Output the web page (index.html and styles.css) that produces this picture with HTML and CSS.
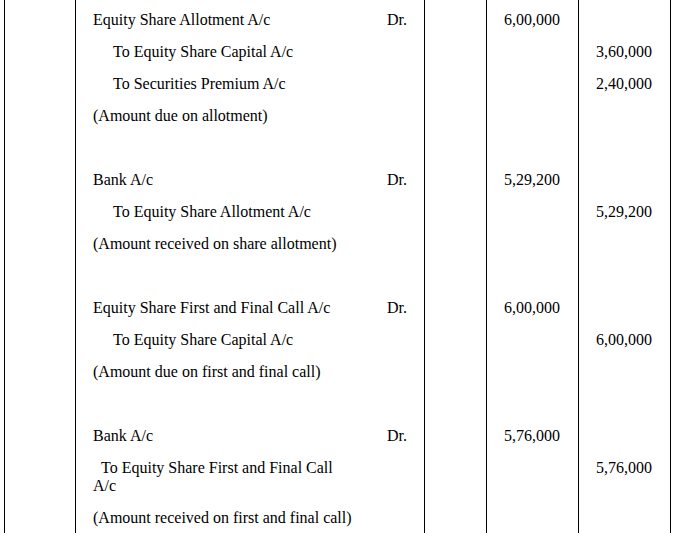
FILE: index.html
```html
<!DOCTYPE html>
<html lang="en">
<head>
<meta charset="utf-8">
<title>Journal Entries</title>
<link rel="stylesheet" href="styles.css">
</head>
<body>
<div class="journal">
  <!-- Entry 1 -->
  <div class="c date"></div><div class="c part">Equity Share Allotment A/c</div><div class="c dr">Dr.</div><div class="c lf"></div><div class="c amt">6,00,000</div><div class="c amt last"></div>
  <div class="c date"></div><div class="c part to">To Equity Share Capital A/c</div><div class="c dr"></div><div class="c lf"></div><div class="c amt"></div><div class="c amt last">3,60,000</div>
  <div class="c date"></div><div class="c part to">To Securities Premium A/c</div><div class="c dr"></div><div class="c lf"></div><div class="c amt"></div><div class="c amt last">2,40,000</div>
  <div class="c date"></div><div class="c part">(Amount due on allotment)</div><div class="c dr"></div><div class="c lf"></div><div class="c amt"></div><div class="c amt last"></div>
  <div class="c date"></div><div class="c part"></div><div class="c dr"></div><div class="c lf"></div><div class="c amt"></div><div class="c amt last"></div>

  <!-- Entry 2 -->
  <div class="c date"></div><div class="c part">Bank A/c</div><div class="c dr">Dr.</div><div class="c lf"></div><div class="c amt">5,29,200</div><div class="c amt last"></div>
  <div class="c date"></div><div class="c part to">To Equity Share Allotment A/c</div><div class="c dr"></div><div class="c lf"></div><div class="c amt"></div><div class="c amt last">5,29,200</div>
  <div class="c date"></div><div class="c part">(Amount received on share allotment)</div><div class="c dr"></div><div class="c lf"></div><div class="c amt"></div><div class="c amt last"></div>
  <div class="c date"></div><div class="c part"></div><div class="c dr"></div><div class="c lf"></div><div class="c amt"></div><div class="c amt last"></div>

  <!-- Entry 3 -->
  <div class="c date"></div><div class="c part">Equity Share First and Final Call A/c</div><div class="c dr">Dr.</div><div class="c lf"></div><div class="c amt">6,00,000</div><div class="c amt last"></div>
  <div class="c date"></div><div class="c part to">To Equity Share Capital A/c</div><div class="c dr"></div><div class="c lf"></div><div class="c amt"></div><div class="c amt last">6,00,000</div>
  <div class="c date"></div><div class="c part">(Amount due on first and final call)</div><div class="c dr"></div><div class="c lf"></div><div class="c amt"></div><div class="c amt last"></div>
  <div class="c date"></div><div class="c part"></div><div class="c dr"></div><div class="c lf"></div><div class="c amt"></div><div class="c amt last"></div>

  <!-- Entry 4 -->
  <div class="c date"></div><div class="c part">Bank A/c</div><div class="c dr">Dr.</div><div class="c lf"></div><div class="c amt">5,76,000</div><div class="c amt last"></div>
  <div class="c date"></div><div class="c part to-short">To Equity Share First and Final Call A/c</div><div class="c dr"></div><div class="c lf"></div><div class="c amt"></div><div class="c amt last">5,76,000</div>
  <div class="c date"></div><div class="c part">(Amount received on first and final call)</div><div class="c dr"></div><div class="c lf"></div><div class="c amt"></div><div class="c amt last"></div>
  <div class="c date"></div><div class="c part"></div><div class="c dr"></div><div class="c lf"></div><div class="c amt"></div><div class="c amt last"></div>
</div>
</body>
</html>
```
FILE: styles.css
```css
html, body {
  margin: 0;
  padding: 0;
  background: #fff;
  overflow: hidden;
}

body {
  font-family: "Liberation Serif", "Times New Roman", serif;
  font-size: 16px;
  color: #000;
}

.journal {
  margin-left: 4px;
  display: grid;
  grid-template-columns: 71px 285px 64px 62px 92px 93px;
  width: 667px;
}

.c {
  box-sizing: border-box;
  line-height: 18px;
  padding-top: 11px;
  padding-bottom: 3px;
  min-height: 32px;
}

.date,
.part,
.lf,
.amt {
  border-left: 1px solid #000;
}

.last {
  border-right: 1px solid #000;
}

.part {
  padding-left: 17px;
  padding-right: 4px;
}

.to {
  text-indent: 20px;
}

.to-short {
  text-indent: 8px;
}

.dr {
  text-align: right;
  padding-right: 17px;
}

.amt {
  text-align: right;
  padding-right: 18px;
}
```
